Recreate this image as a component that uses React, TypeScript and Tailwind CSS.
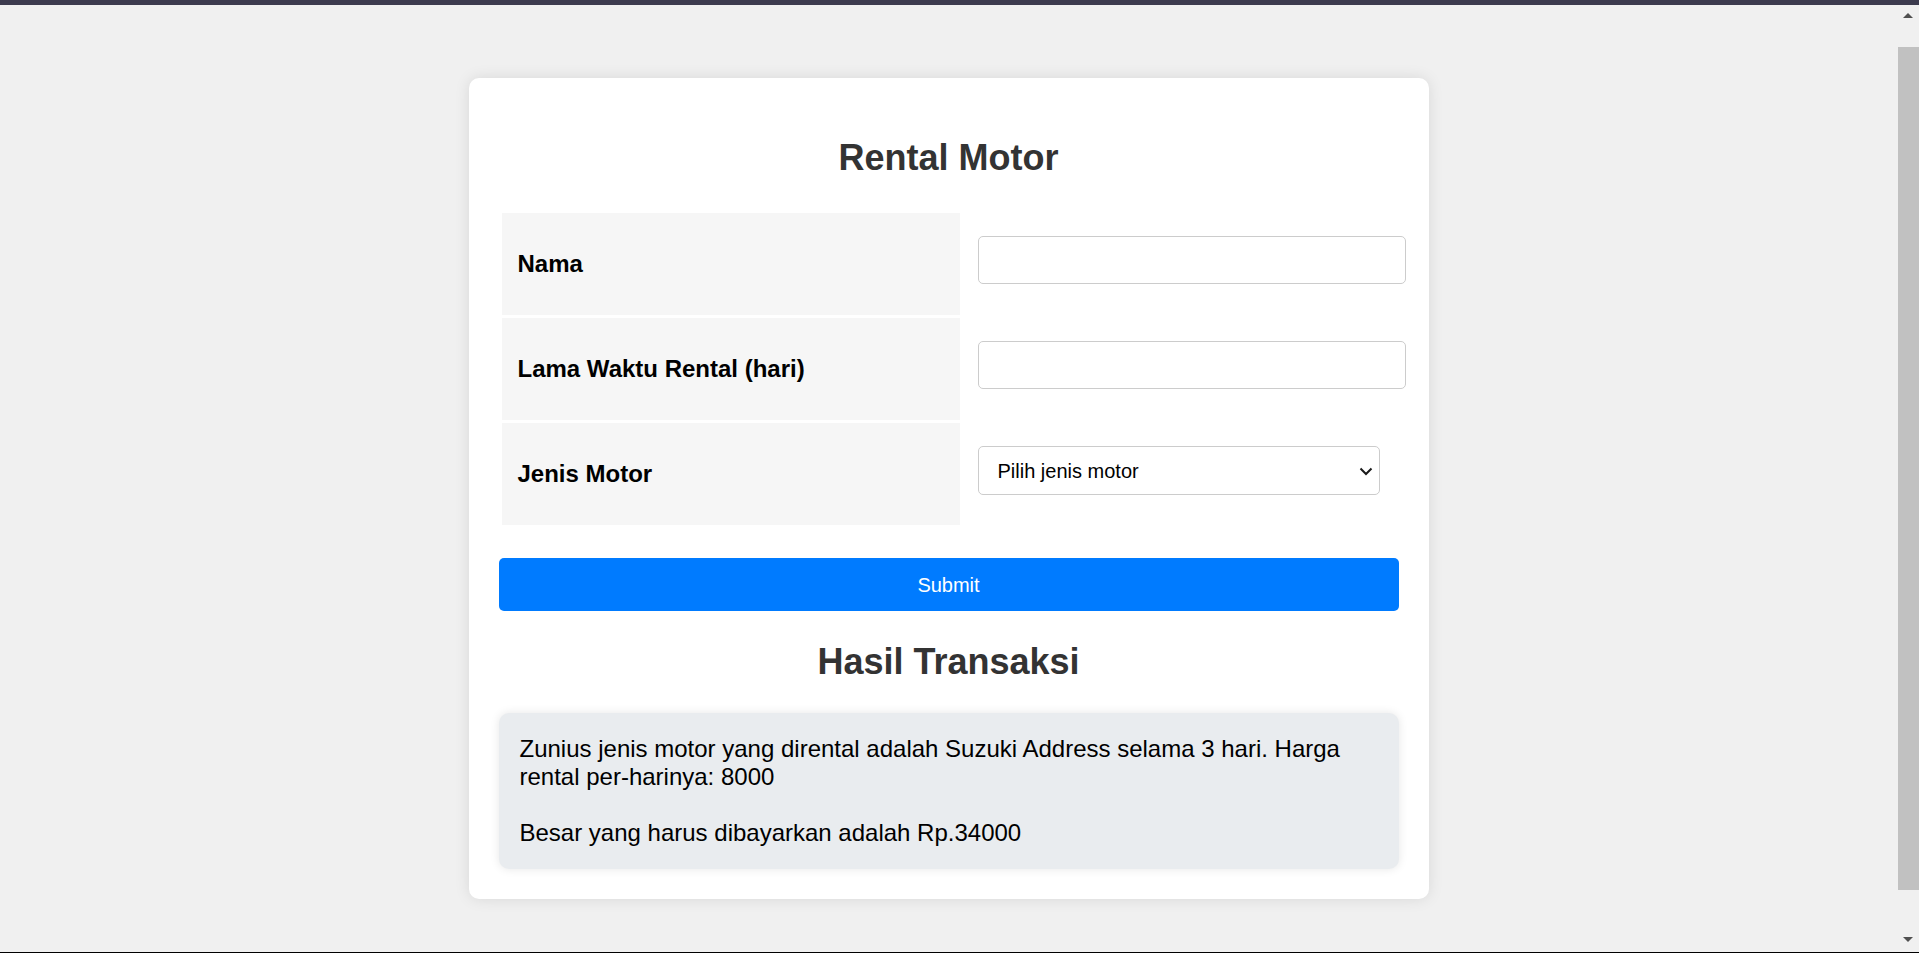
import { useState } from "react";

const fields = [
	{ key: "nama", label: "Nama" },
	{ key: "lama", label: "Lama Waktu Rental (hari)" },
];

export default function App() {
	const [nama, setNama] = useState("");
	const [lama, setLama] = useState("");
	const [jenis, setJenis] = useState("");

	const values: Record<string, string> = { nama, lama };
	const setters: Record<string, (v: string) => void> = {
		nama: setNama,
		lama: setLama,
	};

	return (
		<div className="h-[953px] w-full overflow-hidden flex flex-col bg-[#f0f0f0] font-['Liberation_Sans',Arial,sans-serif]">
			{/* window top strip */}
			<div className="h-[5px] shrink-0 bg-[#3c3b4e]" />

			<div className="flex-1 flex min-h-0">
				<main className="flex-1 flex justify-center pt-[73px]">
					<div className="w-[960px] h-[821px] bg-white rounded-[10px] shadow-[0_0_15px_rgba(0,0,0,0.1)] pt-[59px] px-[30px] pb-[30px]">
						<h1 className="text-center text-[36px] leading-[41px] font-bold text-[#333]">
							Rental Motor
						</h1>

						{/* form table */}
						<div className="mt-[35px] ml-[3px] grid grid-cols-[458px_1fr] gap-x-[2px] gap-y-[3px]">
							{fields.map((f) => (
								<div key={f.key} className="contents">
									<div className="h-[102px] bg-[#f6f6f6] pl-[16px] flex items-center text-[24px] font-bold text-black">
										{f.label}
									</div>
									<div className="h-[102px] pl-[16px] pt-[23px]">
										<input
											type="text"
											value={values[f.key]}
											onChange={(e) => setters[f.key](e.target.value)}
											className="w-[428px] h-[48px] border border-[#cccccc] rounded-[5px] bg-white px-[10px] text-[20px] outline-none"
										/>
									</div>
								</div>
							))}
							<div className="h-[102px] bg-[#f6f6f6] pl-[16px] flex items-center text-[24px] font-bold text-black">
								Jenis Motor
							</div>
							<div className="h-[102px] pl-[16px] pt-[23px]">
								<div className="relative w-[402px]">
									<select
										value={jenis}
										onChange={(e) => setJenis(e.target.value)}
										className="appearance-none w-[402px] h-[49px] border border-[#cccccc] rounded-[5px] bg-white pl-[19px] pr-[30px] text-[20px] text-black outline-none"
									>
										<option value="">Pilih jenis motor</option>
										<option value="honda">Honda Beat</option>
										<option value="suzuki">Suzuki Address</option>
										<option value="yamaha">Yamaha Mio</option>
									</select>
									<svg
										className="absolute right-[7px] top-[21px] pointer-events-none"
										width="14"
										height="9"
										viewBox="0 0 14 9"
										fill="none"
									>
										<path d="M1.5 1.5 L7 7 L12.5 1.5" stroke="#1a1a1a" strokeWidth="2" />
									</svg>
								</div>
							</div>
						</div>

						<button
							type="button"
							className="mt-[33px] w-full h-[53px] rounded-[5px] bg-[#007bff] text-white text-[20px]"
						>
							Submit
						</button>

						<h2 className="mt-[30px] text-center text-[36px] leading-[41px] font-bold text-[#333]">
							Hasil Transaksi
						</h2>

						{/* result */}
						<div className="mt-[31px] h-[156px] rounded-[10px] bg-[#e9ecef] shadow-[0_0_10px_rgba(0,0,0,0.1)] py-[22px] pl-[21px] pr-[22px] text-[24px] leading-[28px] text-black">
							<p>
								Zunius jenis motor yang dirental adalah Suzuki Address selama 3
								hari. Harga rental per-harinya: 8000
							</p>
							<p className="mt-[28px]">Besar yang harus dibayarkan adalah Rp.34000</p>
						</div>
					</div>
				</main>

				{/* scrollbar */}
				<div className="w-[22px] shrink-0 flex flex-col items-center bg-[#f0f0f0]">
					<div className="h-[21px] w-full flex items-center justify-center">
						<div className="w-0 h-0 border-x-[5px] border-x-transparent border-b-[5px] border-b-[#505050]" />
					</div>
					<div className="h-[21px]" />
					<div className="h-[843px] w-[21px] bg-[#c1c1c1]" />
					<div className="flex-1" />
					<div className="h-[21px] w-full flex items-center justify-center mb-[2px]">
						<div className="w-0 h-0 border-x-[5px] border-x-transparent border-t-[5px] border-t-[#505050]" />
					</div>
				</div>
			</div>

			<div className="h-px shrink-0 bg-black" />
		</div>
	);
}
